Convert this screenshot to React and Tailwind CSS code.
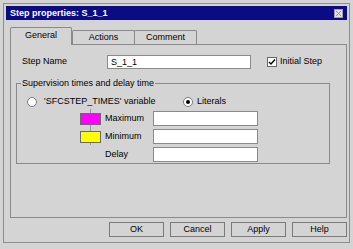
export default function App() {
  const tabBase =
    "h-[14px] flex items-center justify-center border border-b-0 border-[#8a8a8a] rounded-t-[2px] bg-[#d4d4d4] leading-none";
  const input = "h-[15px] bg-white border border-[#8a8a8a]";
  const btn =
    "w-[55px] h-[15px] border border-[#7a7a7a] bg-[#d4d4d4] flex items-center justify-center leading-none";
  return (
    <div className="w-[353px] h-[249px] bg-[#d4d4d4] pt-[3px] pl-[3px] font-['Liberation_Sans',Arial,sans-serif] text-[9px] text-black">
      <div className="w-[347px] h-[240px] border border-[#8e8e8e] p-[2px] flex flex-col">
        {/* Title bar */}
        <div className="h-[14px] shrink-0 bg-[#0b0b83] flex items-center justify-between pl-[4px] pr-[4px]">
          <span className="text-white font-bold text-[9px] leading-none">Step properties: S_1_1</span>
          <div className="w-[9px] h-[9px] bg-[#e4e4e4] border border-[#a0a0a0] flex items-center justify-center">
            <svg width="7" height="7" viewBox="0 0 7 7">
              <path d="M1 1 L6 6 M6 1 L1 6" stroke="#8a8a8a" strokeWidth="1" />
            </svg>
          </div>
        </div>

        {/* Tabs */}
        <div className="mt-[7px] h-[17px] shrink-0 flex items-end pl-[4px] relative z-10">
          <div className="w-[62px] h-[18px] -mb-[1px] flex items-center justify-center border border-b-0 border-[#8a8a8a] rounded-t-[2px] bg-[#d4d4d4] leading-none pb-[2px]">
            General
          </div>
          <div className={`w-[63px] ${tabBase}`}>Actions</div>
          <div className={`w-[63px] -ml-[1px] ${tabBase}`}>Comment</div>
        </div>

        {/* Panel */}
        <div className="ml-[4px] h-[174px] shrink-0 border border-[#8a8a8a] flex flex-col">
          {/* Step name row */}
          <div className="mt-[10px] pl-[11px] h-[14px] flex items-center">
            <span className="w-[85px]">Step Name</span>
            <div className="w-[144px] h-[14px] bg-white border border-[#8a8a8a] flex items-center pl-[3px] leading-none">
              S_1_1
            </div>
            <div className="ml-[16px] w-[10px] h-[10px] bg-white border border-[#6a6a6a] flex items-center justify-center">
              <svg width="8" height="8" viewBox="0 0 8 8">
                <path d="M1 4 L3 6 L7 1.5" stroke="#000" strokeWidth="1.4" fill="none" />
              </svg>
            </div>
            <span className="ml-[3px]">Initial Step</span>
          </div>

          {/* Group box */}
          <div className="mt-[14px] ml-[5px] w-[314px] h-[81px] border border-[#8a8a8a] relative">
            <span className="absolute -top-[6px] left-[4px] bg-[#d4d4d4] px-[1px] leading-[11px]">
              Supervision times and delay time
            </span>
            <div className="pt-[12px] pl-[10px] h-[24px] flex items-center">
              <div className="w-[156px] flex items-center">
                <div className="w-[10px] h-[10px] rounded-full bg-white border border-[#7a7a7a]" />
                <span className="ml-[7px]">'SFCSTEP_TIMES' variable</span>
              </div>
              <div className="w-[10px] h-[10px] rounded-full bg-white border border-[#7a7a7a] flex items-center justify-center">
                <div className="w-[4px] h-[4px] rounded-full bg-black" />
              </div>
              <span className="ml-[4px]">Literals</span>
            </div>

            <div className="mt-[3px] pl-[63px] flex flex-col gap-[3px] relative">
              <div className="absolute left-[73px] top-[-2px] h-[36px] w-[1px] bg-[#9a9a9a]" />
              <div className="h-[15px] flex items-center">
                <div className="w-[21px] h-[12px] bg-[#ff00ff] border border-[#6a6a6a] relative" />
                <span className="ml-[4px] w-[48px]">Maximum</span>
                <div className={`w-[105px] ${input}`} />
              </div>
              <div className="h-[15px] flex items-center">
                <div className="w-[21px] h-[12px] bg-[#ffff00] border border-[#6a6a6a] relative" />
                <span className="ml-[4px] w-[48px]">Minimum</span>
                <div className={`w-[105px] ${input}`} />
              </div>
              <div className="h-[15px] flex items-center">
                <div className="w-[21px] h-[12px]" />
                <span className="ml-[4px] w-[48px]">Delay</span>
                <div className={`w-[105px] ${input}`} />
              </div>
            </div>
          </div>
        </div>

        {/* Buttons */}
        <div className="mt-[4px] flex justify-end gap-[6px]">
          <div className={btn}>OK</div>
          <div className={btn}>Cancel</div>
          <div className={btn}>Apply</div>
          <div className={btn}>Help</div>
        </div>
      </div>
    </div>
  );
}
